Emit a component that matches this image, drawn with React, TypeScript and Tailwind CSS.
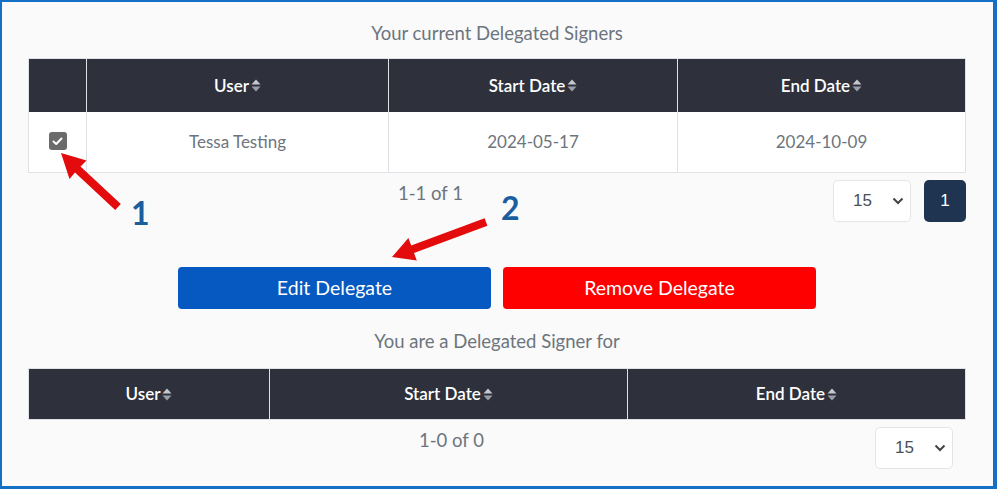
import React from 'react';

const SortIcon = () => (
  <svg width="10" height="13" viewBox="0 0 10 13" className="ml-[2px] inline-block">
    <path d="M5 0.5 L9.5 5.5 H0.5 Z" fill="#c4c7cc" />
    <path d="M0.5 7.5 H9.5 L5 12.5 Z" fill="#9a9ea6" />
  </svg>
);

const Th = ({ label, first }: { label: string; first?: boolean }) => (
  <div className={`flex items-center justify-center text-white text-[17px] font-semibold ${first ? '' : 'border-l border-[#dee2e6]'}`}>
    <span>{label}</span>
    <SortIcon />
  </div>
);

const Select = () => (
  <div className="flex items-center w-[78px] h-[42px] bg-white border border-[#e3e5e8] rounded-[5px] pl-[19px] pr-[6px] font-['Liberation_Sans',Arial,sans-serif] text-[17px] text-[#495057]">
    <span className="flex-1">15</span>
    <svg width="12" height="8" viewBox="0 0 12 8">
      <path d="M1.5 1.5 L6 6 L10.5 1.5" stroke="#444" strokeWidth="2" fill="none" />
    </svg>
  </div>
);

export default function App() {
  return (
    <div className="relative w-[997px] h-[489px] bg-[#fafafa] border-l-2 border-t-2 border-r-4 border-b-[3px] border-[#1370c4] font-['Lato','Noto_Sans',sans-serif] pl-[26px] pr-[27px] pt-[19px] overflow-hidden">
      {/* first block */}
      <div className="text-center text-[18.5px] leading-[24px] text-[#6c757d]">Your current Delegated Signers</div>

      <div className="mt-[13px] border border-[#dee2e6]">
        <div className="grid grid-cols-[57px_302px_289px_1fr] h-[53px] bg-[#2e313c]">
          <div />
          <Th label="User" first={false} />
          <Th label="Start Date" />
          <Th label="End Date" />
        </div>
        <div className="grid grid-cols-[57px_302px_289px_1fr] h-[60px] bg-white text-[17px] text-[#6c757d]">
          <div className="flex items-center justify-center">
            <div className="w-[18px] h-[18px] rounded-[3px] bg-[#6b6b6b] flex items-center justify-center -mt-[2px]">
              <svg width="11" height="9" viewBox="0 0 11 9">
                <path d="M1.5 4.5 L4.2 7 L9.5 1.5" stroke="#fff" strokeWidth="2" fill="none" strokeLinecap="round" strokeLinejoin="round" />
              </svg>
            </div>
          </div>
          <div className="flex items-center justify-center border-l border-[#dee2e6]">Tessa Testing</div>
          <div className="flex items-center justify-center border-l border-[#dee2e6]">2024-05-17</div>
          <div className="flex items-center justify-center border-l border-[#dee2e6]">2024-10-09</div>
        </div>
      </div>

      <div className="mt-[7px] flex items-start gap-[13px]">
        <div className="flex-1 ml-[13px] text-center text-[18.5px] leading-[24px] text-[#6c757d] mt-[1px]">1-1 of 1</div>
        <Select />
        <div className="w-[42px] h-[42px] rounded-[5px] bg-[#1f3450] text-white flex items-center justify-center font-['Liberation_Sans',Arial,sans-serif] text-[17px]">1</div>
      </div>

      <div className="mt-[45px] flex justify-center gap-[12px]">
        <button className="w-[313px] h-[42px] rounded-[4px] bg-[#0659c0] text-white text-[19.5px]">Edit Delegate</button>
        <button className="w-[313px] h-[42px] rounded-[4px] bg-[#ff0000] text-white text-[19.5px]">Remove Delegate</button>
      </div>

      {/* second block */}
      <div className="mt-[20px] text-center text-[18.5px] leading-[24px] text-[#6c757d]">You are a Delegated Signer for</div>

      <div className="mt-[15px] border border-[#dee2e6]">
        <div className="grid grid-cols-[240px_358px_1fr] h-[50px] bg-[#2e313c]">
          <Th label="User" first />
          <Th label="Start Date" />
          <Th label="End Date" />
        </div>
      </div>

      <div className="mt-[7px] flex items-start gap-[13px]">
        <div className="flex-1 ml-[13px] text-center text-[18.5px] leading-[24px] text-[#6c757d] mt-[1px]">1-0 of 0</div>
        <Select />
        <div className="w-0" />
      </div>

      {/* annotations */}
      <svg className="absolute -left-[2px] -top-[2px] pointer-events-none" width="997" height="489" viewBox="0 0 997 489">
        <polygon points="61,153 86.5,160.5 80.5,166.5 120.8,204.1 115.2,209.9 75,172.5 69.5,178.9" fill="#e30b0b" />
        <polygon points="392,257 408.4,238.1 411.2,245.6 484.6,218.3 487.4,225.7 414,253 416.8,260.5" fill="#e30b0b" />
      </svg>
      <span className="absolute left-[129px] top-[195px] text-[32px] leading-[32px] font-bold text-[#1b5e9e]">1</span>
      <span className="absolute left-[499px] top-[190px] text-[32px] leading-[32px] font-bold text-[#1b5e9e]">2</span>
    </div>
  );
}
